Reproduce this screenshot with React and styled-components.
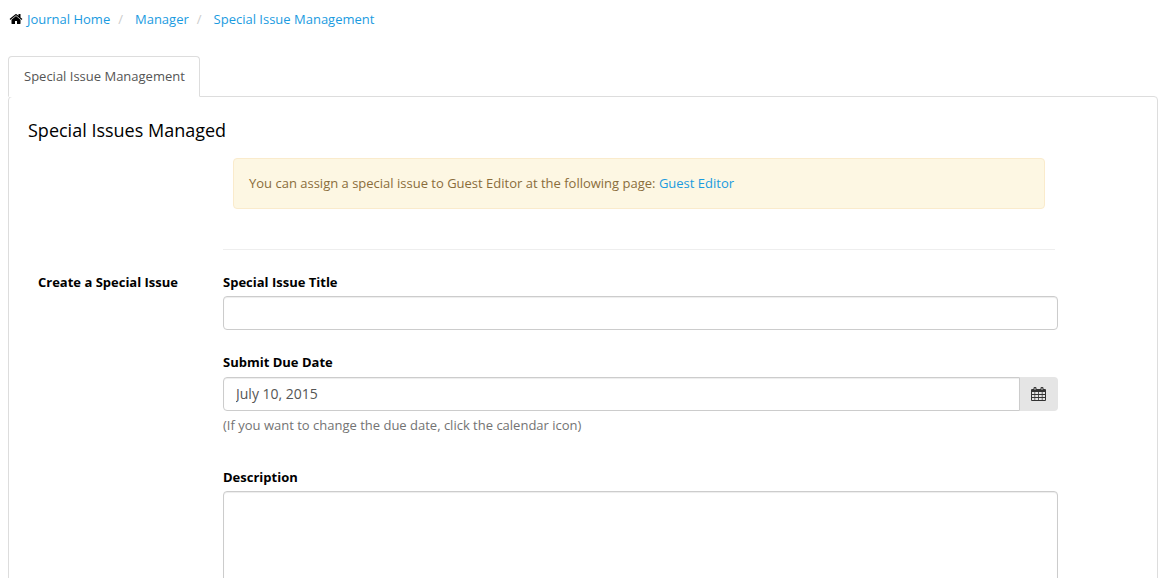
import React from "react";
import styled, { createGlobalStyle } from "styled-components";

const GlobalStyle = createGlobalStyle`
  *, *::before, *::after { box-sizing: border-box; }
  body {
    margin: 0;
    background: #fff;
    color: #000;
    font: 13px/20px "Open Sans", sans-serif;
  }
  input, textarea, button { font-family: inherit; }
`;

const Page = styled.div`
  padding: 8px;
`;

const Link = styled.a`
  color: #1a9bdf;
  text-decoration: none;
  &:hover { text-decoration: underline; }
`;

const Crumbs = styled.ol`
  display: flex;
  align-items: center;
  list-style: none;
  margin: 0 0 27px;
  padding: 1px 0 0 1px;
`;

const Crumb = styled.li`
  display: flex;
  align-items: center;
  & + &::before {
    content: "/";
    color: #ccc;
    padding: 0 12px 0 8px;
  }
`;

const Icon = styled.svg`
  display: block;
  width: ${(p) => p.$width}px;
  height: ${(p) => p.$height || p.$width}px;
  margin-right: ${(p) => p.$gap || 0}px;
  fill: currentColor;
`;

const Tabs = styled.nav`
  display: flex;
  margin-bottom: -1px;
`;

const Tab = styled.a`
  position: relative;
  padding: 9px 14px 10px 15px;
  color: #555;
  background: #fff;
  text-decoration: none;
  border: 1px solid #ddd;
  border-bottom-color: transparent;
  border-radius: 4px 4px 0 0;
`;

const Panel = styled.main`
  min-height: 600px;
  padding: 20px 99px 20px 19px;
  border: 1px solid #ddd;
  border-radius: 4px;
`;

const Heading = styled.h1`
  margin: 0 0 15px;
  font-size: 18px;
  line-height: 26px;
  font-weight: 400;
`;

const Intro = styled.div`
  margin-left: 195px;
  margin-right: 3px;
  padding-bottom: 40px;
  border-bottom: 1px solid #eee;
`;

const Alert = styled.div`
  margin: 0 10px;
  padding: 14px 15px 15px;
  color: #8a6d3b;
  background: #fdf7e3;
  border: 1px solid #faebcc;
  border-radius: 4px;
`;

const Form = styled.form`
  display: grid;
  grid-template-columns: 185px minmax(0, 1fr);
  padding: 22px 0 0 10px;
`;

const FormTitle = styled.h2`
  margin: 0;
  font-size: 13px;
  line-height: 20px;
  font-weight: 700;
`;

const Field = styled.div`
  margin-bottom: ${(p) => (p.$hint ? 32 : 22)}px;
`;

const Label = styled.label`
  display: block;
  margin-bottom: 4px;
  font-weight: 700;
`;

const controlStyles = `
  display: block;
  width: 100%;
  padding: 5px 12px 7px;
  color: #555;
  font-size: 14px;
  line-height: 20px;
  background: #fff;
  border: 1px solid #ccc;
  border-radius: 4px;
  box-shadow: inset 0 1px 1px rgba(0, 0, 0, 0.075);
`;

const Input = styled.input`
  ${controlStyles}
  height: 34px;
`;

const TextArea = styled.textarea`
  ${controlStyles}
  height: 160px;
  resize: vertical;
`;

const InputGroup = styled.div`
  display: flex;
  margin-top: 5px;
  ${Input} {
    flex: 1;
    border-radius: 4px 0 0 4px;
  }
`;

const CalendarButton = styled.button`
  display: flex;
  align-items: center;
  justify-content: center;
  width: 38px;
  padding: 0 1px 0 0;
  color: #333;
  background: #e5e5e5;
  border: 0;
  border-radius: 0 4px 4px 0;
  cursor: pointer;
`;

const Hint = styled.p`
  margin: 4px 0 0;
  color: #737373;
`;

const HomeIcon = () => (
  <Icon $width={14} $gap={4} viewBox="0 0 1792 1792" aria-hidden="true">
    <path d="M1472 992v480q0 26-19 45t-45 19h-384v-384h-256v384h-384q-26 0-45-19t-19-45v-480q0-1 .5-3t.5-3l575-474 575 474q1 2 1 6zm223-69l-62 74q-8 9-21 11h-3q-13 0-21-7l-692-577-692 577q-12 8-24 7-13-2-21-11l-62-74q-8-10-7-23.5t11-21.5l719-599q32-26 76-26t76 26l244 204v-195q0-14 9-23t23-9h192q14 0 23 9t9 23v408l219 182q10 8 11 21.5t-7 23.5z" />
  </Icon>
);

const CalendarIcon = () => (
  <Icon $width={15} $height={14} viewBox="0 0 15 14" aria-hidden="true">
    <path
      fillRule="evenodd"
      d="M1 2H2.5V1.2Q2.5 0 3.7 0H4.3Q5.5 0 5.5 1.2V2H9.5V1.2Q9.5 0 10.7 0H11.3Q12.5 0 12.5 1.2V2H14Q15 2 15 3V13Q15 14 14 14H1Q0 14 0 13V3Q0 2 1 2ZM3.6 1V3H4.4V1ZM10.6 1V3H11.4V1ZM1 5V7H3.5V5ZM4.2 5V7H7.1V5ZM7.9 5V7H10.8V5ZM11.5 5V7H14V5ZM1 8V10H3.5V8ZM4.2 8V10H7.1V8ZM7.9 8V10H10.8V8ZM11.5 8V10H14V8ZM1 11V13H3.5V11ZM4.2 11V13H7.1V11ZM7.9 11V13H10.8V11ZM11.5 11V13H14V11Z"
    />
  </Icon>
);

export default function App() {
  return (
    <>
      <GlobalStyle />
      <Page>
        <Crumbs>
          <Crumb>
            <HomeIcon />
            <Link href="#home">Journal Home</Link>
          </Crumb>
          <Crumb>
            <Link href="#manager">Manager</Link>
          </Crumb>
          <Crumb>
            <Link href="#special-issues">Special Issue Management</Link>
          </Crumb>
        </Crumbs>
        <Tabs>
          <Tab href="#special-issues">Special Issue Management</Tab>
        </Tabs>
        <Panel>
          <Heading>Special Issues Managed</Heading>
          <Intro>
            <Alert>
              You can assign a special issue to Guest Editor at the following page:{" "}
              <Link href="#guest-editor">Guest Editor</Link>
            </Alert>
          </Intro>
          <Form>
            <FormTitle>Create a Special Issue</FormTitle>
            <div>
              <Field>
                <Label htmlFor="title">Special Issue Title</Label>
                <Input id="title" type="text" />
              </Field>
              <Field $hint>
                <Label htmlFor="due">Submit Due Date</Label>
                <InputGroup>
                  <Input id="due" type="text" defaultValue="July 10, 2015" />
                  <CalendarButton type="button" aria-label="Choose due date">
                    <CalendarIcon />
                  </CalendarButton>
                </InputGroup>
                <Hint>(If you want to change the due date, click the calendar icon)</Hint>
              </Field>
              <Field>
                <Label htmlFor="description">Description</Label>
                <TextArea id="description" />
              </Field>
            </div>
          </Form>
        </Panel>
      </Page>
    </>
  );
}
